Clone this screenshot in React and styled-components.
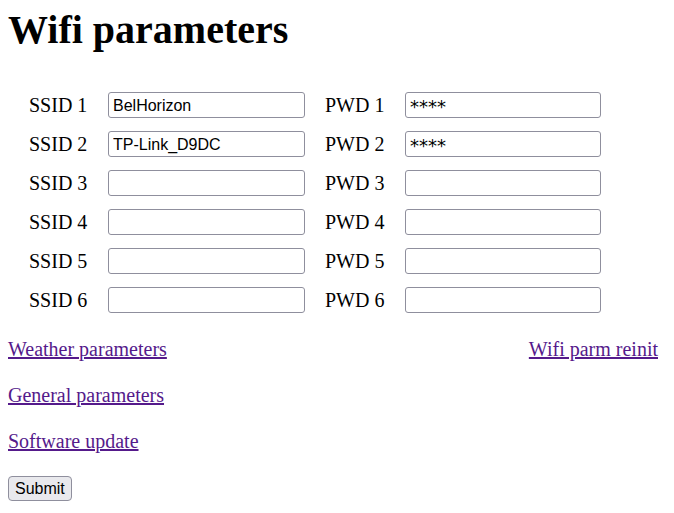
import React from "react";
import styled, { createGlobalStyle } from "styled-components";

const GlobalStyle = createGlobalStyle`
  html, body {
    margin: 0;
    padding: 0;
    background: #ffffff;
  }
  body {
    font-family: "Liberation Serif", "Times New Roman", serif;
    color: #000000;
  }
`;

const Page = styled.form`
  padding: 7px 8px 0 8px;
  width: 666px;
  box-sizing: border-box;
`;

const Title = styled.h1`
  margin: 0;
  font-size: 40px;
  font-weight: bold;
  line-height: 46px;
`;

const Grid = styled.div`
  display: grid;
  grid-template-columns: 79px 217px 80px 196px;
  grid-auto-rows: 26px;
  row-gap: 13px;
  align-items: center;
  margin: 39px 0 0 21px;
`;

const Label = styled.label`
  font-size: 20px;
  line-height: 23px;
  white-space: nowrap;
`;

const Field = styled.input`
  box-sizing: border-box;
  width: ${(p) => (p.$secret ? "196px" : "197px")};
  height: 26px;
  margin: 0;
  padding: 2px 4px 0 4px;
  border: 1px solid #8f8f9d;
  border-radius: 3px;
  background: #ffffff;
  font-family: ${(p) =>
    p.$secret ? `"DejaVu Sans", Verdana, sans-serif` : `"Liberation Sans", Arial, sans-serif`};
  font-size: ${(p) => (p.$secret ? "18px" : "16px")};
  color: #000000;
  outline: none;
`;

const LinkRow = styled.div`
  display: flex;
  justify-content: ${(p) => (p.$split ? "space-between" : "flex-start")};
  margin-top: ${(p) => p.$top}px;
`;

const Link = styled.a`
  font-size: 20px;
  line-height: 23px;
  color: #551a8b;
  text-decoration: underline;
`;

const Submit = styled.button`
  display: block;
  margin-top: 23px;
  height: 25px;
  padding: 0 6px;
  border: 1px solid #8f8f9d;
  border-radius: 4px;
  background: #e9e9ed;
  font-family: "Liberation Sans", Arial, sans-serif;
  font-size: 16px;
  color: #000000;
`;

const networks = [
  { ssid: "BelHorizon", pwd: "****" },
  { ssid: "TP-Link_D9DC", pwd: "****" },
  { ssid: "", pwd: "" },
  { ssid: "", pwd: "" },
  { ssid: "", pwd: "" },
  { ssid: "", pwd: "" },
];

export default function App() {
  return (
    <>
      <GlobalStyle />
      <Page onSubmit={(e) => e.preventDefault()}>
        <Title>Wifi parameters</Title>
        <Grid>
          {networks.map((n, i) => (
            <React.Fragment key={i}>
              <Label>SSID {i + 1}</Label>
              <Field type="text" defaultValue={n.ssid} />
              <Label>PWD {i + 1}</Label>
              <Field type="text" $secret defaultValue={n.pwd} />
            </React.Fragment>
          ))}
        </Grid>
        <LinkRow $split $top={25}>
          <Link href="#weather">Weather parameters</Link>
          <Link href="#reinit">Wifi parm reinit</Link>
        </LinkRow>
        <LinkRow $top={23}>
          <Link href="#general">General parameters</Link>
        </LinkRow>
        <LinkRow $top={23}>
          <Link href="#update">Software update</Link>
        </LinkRow>
        <Submit type="submit">Submit</Submit>
      </Page>
    </>
  );
}
